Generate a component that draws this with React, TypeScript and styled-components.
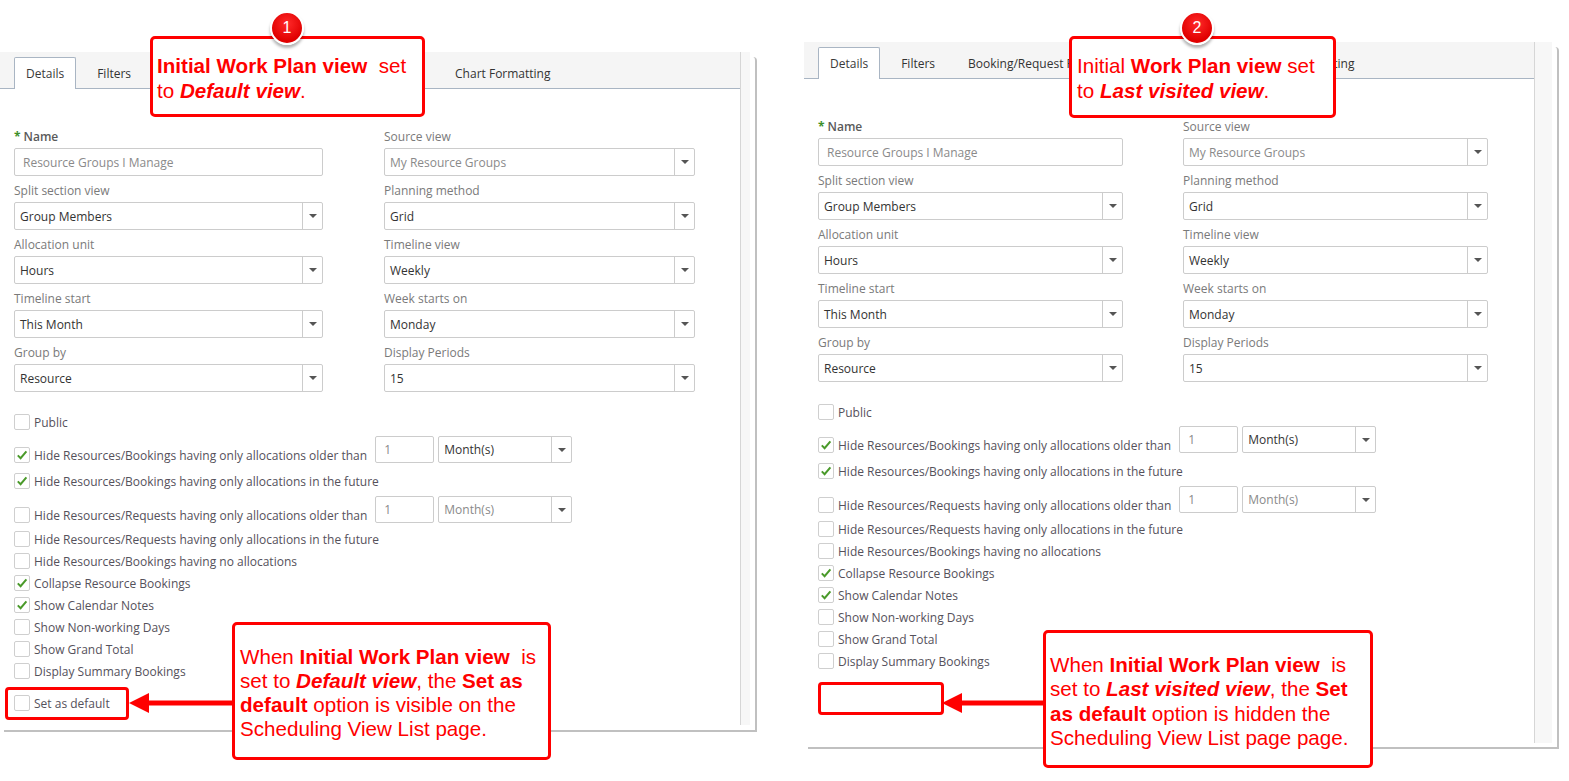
import React from "react";
import styled, { createGlobalStyle, css } from "styled-components";

const GlobalStyle = createGlobalStyle`
  html, body {
    margin: 0;
    padding: 0;
    background: #ffffff;
  }
  * {
    box-sizing: border-box;
  }
`;

const palette = {
  red: "#ff0000",
  tabLine: "#a9b5c3",
  border: "#cccccc",
  label: "#7a7a7a",
  text: "#333333",
  muted: "#8a8a8a",
  checkText: "#55515b",
  green: "#4a9a2a",
};

const Page = styled.div`
  position: relative;
  width: 1569px;
  height: 781px;
  overflow: hidden;
  display: flex;
  align-items: flex-start;
  background: #ffffff;
  font-family: "Open Sans", "Segoe UI", sans-serif;
`;

// screenshot frame with the gray drop line on the right and bottom
const Shot = styled.div<{ $w: number; $h: number; $ml: number; $mt: number }>`
  position: relative;
  flex: none;
  width: ${(p) => p.$w}px;
  height: ${(p) => p.$h}px;
  margin-left: ${(p) => p.$ml}px;
  margin-top: ${(p) => p.$mt}px;

  &::after {
    content: "";
    position: absolute;
    top: 5px;
    left: 4px;
    right: 0;
    bottom: 0;
    border-right: 2px solid #c0c0c0;
    border-bottom: 2px solid #c0c0c0;
    border-top-right-radius: 4px;
    pointer-events: none;
  }
`;

const Inner = styled.div<{ $h: number }>`
  display: flex;
  height: ${(p) => p.$h}px;
`;

const Panel = styled.div<{ $w: number }>`
  flex: none;
  width: ${(p) => p.$w}px;
  height: 100%;
  background: #ffffff;
  border-right: 1px solid #d6d6d6;
`;

const Track = styled.div<{ $w: number }>`
  flex: none;
  width: ${(p) => p.$w}px;
  height: 100%;
  background: #f7f7f7;
`;

const TabBar = styled.div`
  display: flex;
  align-items: flex-end;
  gap: 9px;
  height: 37px;
  padding-left: 14px;
  background: #f5f5f5;
  border-bottom: 1px solid ${palette.tabLine};
`;

const Tab = styled.div<{ $active?: boolean }>`
  height: 31px;
  padding: 0 11px;
  display: flex;
  align-items: center;
  font-size: 12px;
  color: ${palette.text};
  white-space: nowrap;
  border: 1px solid transparent;
  border-bottom: none;
  border-radius: 2px 2px 0 0;
  ${(p) =>
    p.$active &&
    css`
      background: #ffffff;
      border-color: ${palette.tabLine};
      margin-bottom: -1px;
      height: 32px;
      color: #3a3a3a;
    `}
`;

const Form = styled.div`
  padding: 40px 0 0 14px;
`;

const FormGrid = styled.div<{ $cols: string; $gap: number }>`
  display: grid;
  grid-template-columns: ${(p) => p.$cols};
  column-gap: ${(p) => p.$gap}px;
  row-gap: 7px;
`;

const Field = styled.div`
  display: flex;
  flex-direction: column;
`;

const FieldLabel = styled.div<{ $strong?: boolean }>`
  height: 16px;
  line-height: 16px;
  margin-bottom: 3px;
  font-size: 12px;
  color: ${(p) => (p.$strong ? "#5a5a5a" : palette.label)};
  font-weight: ${(p) => (p.$strong ? 600 : 400)};

  span {
    color: #3f8f2a;
    font-weight: 700;
    margin-right: 3px;
  }
`;

const TextBox = styled.div<{ $w?: number; $h?: number; $muted?: boolean }>`
  width: ${(p) => (p.$w ? `${p.$w}px` : "100%")};
  height: ${(p) => p.$h || 28}px;
  padding-left: 8px;
  display: flex;
  align-items: center;
  border: 1px solid ${palette.border};
  border-radius: 2px;
  font-size: 12px;
  color: ${(p) => (p.$muted ? palette.muted : palette.text)};
  background: #ffffff;
  flex: none;
`;

const SelectBox = styled.div<{ $w?: number; $h?: number }>`
  width: ${(p) => (p.$w ? `${p.$w}px` : "100%")};
  height: ${(p) => p.$h || 28}px;
  display: flex;
  border: 1px solid ${palette.border};
  border-radius: 2px;
  background: #ffffff;
  flex: none;
`;

const SelectValue = styled.div<{ $muted?: boolean }>`
  flex: 1;
  padding-left: 5px;
  display: flex;
  align-items: center;
  font-size: 12px;
  color: ${(p) => (p.$muted ? palette.muted : palette.text)};
  white-space: nowrap;
`;

const SelectArrow = styled.div`
  width: 20px;
  border-left: 1px solid ${palette.border};
  display: flex;
  align-items: center;
  justify-content: center;

  &::before {
    content: "";
    border-left: 4px solid transparent;
    border-right: 4px solid transparent;
    border-top: 4px solid #555555;
  }
`;

const CheckList = styled.div`
  display: flex;
  flex-direction: column;
  margin-top: 19px;
`;

const CheckRow = styled.div<{ $mt?: number; $tall?: boolean }>`
  display: flex;
  align-items: center;
  height: ${(p) => (p.$tall ? 28 : 22)}px;
  margin-top: ${(p) => p.$mt || 0}px;
`;

const Check = styled.div<{ $tall?: boolean }>`
  display: flex;
  align-items: center;
  gap: 4px;
  height: 22px;
  font-size: 12px;
  color: ${palette.checkText};
  white-space: nowrap;
  ${(p) =>
    p.$tall &&
    css`
      align-self: flex-end;
      margin-bottom: -2px;
      margin-right: 8px;
    `}
`;

const Box = styled.div`
  width: 16px;
  height: 16px;
  flex: none;
  border: 1px solid #cfcfcf;
  border-radius: 2px;
  background: #ffffff;
  display: flex;
  align-items: center;
  justify-content: center;
`;

const InlineFields = styled.div`
  display: flex;
  gap: 4px;
  align-self: flex-start;
`;

// annotations laid over the screenshots
const Callout = styled.div<{ $x: number; $y: number; $w: number; $h: number; $pt: number; $pl: number; $lh: number }>`
  position: absolute;
  left: ${(p) => p.$x}px;
  top: ${(p) => p.$y}px;
  width: ${(p) => p.$w}px;
  height: ${(p) => p.$h}px;
  padding: ${(p) => p.$pt}px 2px 0 ${(p) => p.$pl}px;
  border: 3px solid ${palette.red};
  border-radius: 5px;
  background: #ffffff;
  color: ${palette.red};
  font-family: "Liberation Sans", Arial, sans-serif;
  font-size: 20.6px;
  line-height: ${(p) => p.$lh}px;
  white-space: nowrap;

  b {
    font-weight: 700;
  }
`;

const Badge = styled.div<{ $x: number; $y: number }>`
  position: absolute;
  left: ${(p) => p.$x - 17}px;
  top: ${(p) => p.$y - 17}px;
  width: 34px;
  height: 34px;
  border-radius: 50%;
  border: 2px solid #ffffff;
  background: radial-gradient(circle at 50% 35%, #ff2a2a, #e00000 70%);
  box-shadow: 0 3px 3px rgba(0, 0, 0, 0.3);
  color: #ffffff;
  font-family: "Liberation Sans", Arial, sans-serif;
  font-size: 16px;
  display: flex;
  align-items: center;
  justify-content: center;
`;

const Highlight = styled.div<{ $x: number; $y: number; $w: number; $h: number }>`
  position: absolute;
  left: ${(p) => p.$x}px;
  top: ${(p) => p.$y}px;
  width: ${(p) => p.$w}px;
  height: ${(p) => p.$h}px;
  border: 3px solid ${palette.red};
  border-radius: 4px;
`;

const ArrowWrap = styled.svg<{ $x: number; $y: number }>`
  position: absolute;
  left: ${(p) => p.$x}px;
  top: ${(p) => p.$y}px;
`;

const CheckMark = () => (
  <svg width="12" height="12" viewBox="0 0 12 12">
    <path d="M1.8 6.4 L4.6 9.2 L10.4 2.4" fill="none" stroke={palette.green} strokeWidth="2" />
  </svg>
);

const Arrow: React.FC<{ x: number; y: number; len: number }> = ({ x, y, len }) => (
  <ArrowWrap $x={x} $y={y} width={len} height={22} viewBox={`0 0 ${len} 22`}>
    <rect x="16" y="8.5" width={len - 16} height="5" fill={palette.red} />
    <polygon points="0,11 20,1 20,21" fill={palette.red} />
  </ArrowWrap>
);

const Select: React.FC<{ value: string; muted?: boolean; w?: number; h?: number }> = ({ value, muted, w, h }) => (
  <SelectBox $w={w} $h={h}>
    <SelectValue $muted={muted}>{value}</SelectValue>
    <SelectArrow />
  </SelectBox>
);

const fields = [
  { left: "Split section view", lv: "Group Members", right: "Planning method", rv: "Grid" },
  { left: "Allocation unit", lv: "Hours", right: "Timeline view", rv: "Weekly" },
  { left: "Timeline start", lv: "This Month", right: "Week starts on", rv: "Monday" },
  { left: "Group by", lv: "Resource", right: "Display Periods", rv: "15" },
];

type Opt = { label: string; checked?: boolean; mt?: number; inputs?: "on" | "off" };

const options: Opt[] = [
  { label: "Public" },
  { label: "Hide Resources/Bookings having only allocations older than", checked: true, mt: 3, inputs: "on" },
  { label: "Hide Resources/Bookings having only allocations in the future", checked: true, mt: 6 },
  { label: "Hide Resources/Requests having only allocations older than", mt: 4, inputs: "off" },
  { label: "Hide Resources/Requests having only allocations in the future", mt: 4 },
  { label: "Hide Resources/Bookings having no allocations" },
  { label: "Collapse Resource Bookings", checked: true },
  { label: "Show Calendar Notes", checked: true },
  { label: "Show Non-working Days" },
  { label: "Show Grand Total" },
  { label: "Display Summary Bookings" },
];

const ViewSettings: React.FC<{ showDefault: boolean; cols: string; gap: number }> = ({ showDefault, cols, gap }) => {
  const list: Opt[] = showDefault ? [...options, { label: "Set as default", mt: 10 }] : options;
  return (
    <>
      <TabBar>
        <Tab $active>Details</Tab>
        <Tab>Filters</Tab>
        <Tab>Booking/Request Formatting</Tab>
        <Tab>Grid Layout</Tab>
        <Tab>Chart Formatting</Tab>
      </TabBar>
      <Form>
        <FormGrid $cols={cols} $gap={gap}>
          <Field>
            <FieldLabel $strong>
              <span>*</span>Name
            </FieldLabel>
            <TextBox $muted>Resource Groups I Manage</TextBox>
          </Field>
          <Field>
            <FieldLabel>Source view</FieldLabel>
            <Select value="My Resource Groups" muted />
          </Field>
          {fields.map((f) => (
            <React.Fragment key={f.left}>
              <Field>
                <FieldLabel>{f.left}</FieldLabel>
                <Select value={f.lv} />
              </Field>
              <Field>
                <FieldLabel>{f.right}</FieldLabel>
                <Select value={f.rv} />
              </Field>
            </React.Fragment>
          ))}
        </FormGrid>
        <CheckList>
          {list.map((o) => (
            <CheckRow key={o.label} $mt={o.mt} $tall={!!o.inputs}>
              <Check $tall={!!o.inputs}>
                <Box>{o.checked && <CheckMark />}</Box>
                {o.label}
              </Check>
              {o.inputs && (
                <InlineFields>
                  <TextBox $w={59} $h={27} $muted>
                    1
                  </TextBox>
                  <Select value="Month(s)" muted={o.inputs === "off"} w={134} h={27} />
                </InlineFields>
              )}
            </CheckRow>
          ))}
        </CheckList>
      </Form>
    </>
  );
};

const App: React.FC = () => {
  return (
    <Page>
      <GlobalStyle />
      <Shot $w={757} $h={680} $ml={0} $mt={52}>
        <Inner $h={673}>
          <Panel $w={741}>
            <ViewSettings showDefault cols="309px 311px" gap={61} />
          </Panel>
          <Track $w={9} />
        </Inner>
      </Shot>
      <Shot $w={755} $h={707} $ml={47} $mt={42}>
        <Inner $h={701}>
          <Panel $w={731}>
            <ViewSettings showDefault={false} cols="305px 305px" gap={60} />
          </Panel>
          <Track $w={17} />
        </Inner>
      </Shot>

      <Callout $x={150} $y={36} $w={275} $h={81} $pt={14} $pl={4} $lh={25}>
        <b>Initial Work Plan view</b>&nbsp; set
        <br />
        to <b><i>Default view</i></b>.
      </Callout>
      <Badge $x={287} $y={28}>1</Badge>

      <Callout $x={1069} $y={36} $w={267} $h={82} $pt={14} $pl={5} $lh={25}>
        Initial <b>Work Plan view</b> set
        <br />
        to <b><i>Last visited view</i></b>.
      </Callout>
      <Badge $x={1197} $y={28}>2</Badge>

      <Highlight $x={5} $y={687} $w={124} $h={33} />
      <Arrow x={129} y={692} len={104} />
      <Callout $x={232} $y={622} $w={319} $h={138} $pt={20} $pl={5} $lh={24}>
        When <b>Initial Work Plan view</b>&nbsp; is
        <br />
        set to <b><i>Default view</i></b>, the <b>Set as</b>
        <br />
        <b>default</b> option is visible on the
        <br />
        Scheduling View List page.
      </Callout>

      <Highlight $x={818} $y={682} $w={126} $h={33} />
      <Arrow x={942} y={692} len={102} />
      <Callout $x={1043} $y={630} $w={330} $h={138} $pt={20} $pl={4} $lh={24.3}>
        When <b>Initial Work Plan view</b>&nbsp; is
        <br />
        set to <b><i>Last visited view</i></b>, the <b>Set</b>
        <br />
        <b>as default</b> option is hidden the
        <br />
        Scheduling View List page page.
      </Callout>
    </Page>
  );
};

export default App;
